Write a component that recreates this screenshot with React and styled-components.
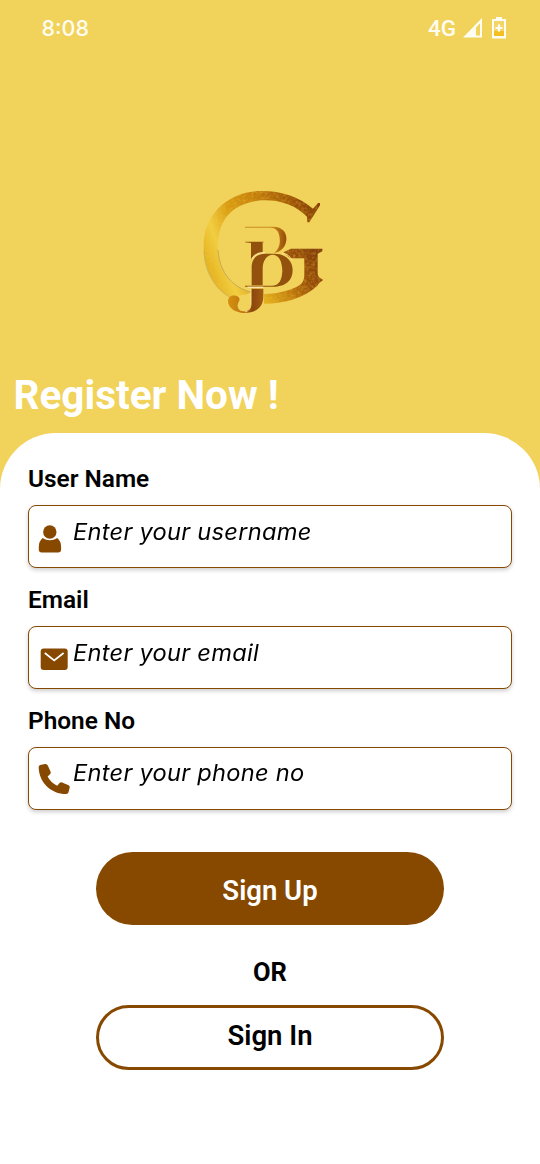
import React from "react";
import styled, { createGlobalStyle } from "styled-components";

const GlobalStyle = createGlobalStyle`
  *, *::before, *::after { box-sizing: border-box; }
  body { margin: 0; background: #f1d25b; }
`;

const Screen = styled.main`
  display: flex;
  flex-direction: column;
  width: 540px;
  height: 1164px;
  overflow: hidden;
  background: #f1d25b;
  color: #000;
  font-family: Roboto, "Liberation Sans", sans-serif;
`;

const StatusBar = styled.header`
  display: flex;
  align-items: center;
  justify-content: space-between;
  height: 56px;
  padding: 0 34px 0 41.5px;
  color: #fffdf2;
`;

const Clock = styled.span`
  font-family: Inter, sans-serif;
  font-size: 21.5px;
  font-weight: 500;
`;

const StatusIcons = styled.div`
  display: flex;
  align-items: center;
`;

const Network = styled.span`
  margin-right: 7px;
  font-size: 22.5px;
  font-weight: 500;
`;

const Brand = styled.div`
  display: flex;
  height: 269px;
  padding: 124px 0 0 190px;
`;

const Title = styled.h1`
  height: 108px;
  margin: 0;
  padding: 46px 0 0 13.5px;
  color: #fff;
  font-size: 40.5px;
  font-weight: 700;
  line-height: 48px;
  white-space: nowrap;
`;

const Card = styled.section`
  display: flex;
  flex: 1;
  flex-direction: column;
  align-items: center;
  padding: 30px 28px 0;
  border-radius: 56px 56px 0 0;
  background: #fff;
`;

const Field = styled.label`
  display: flex;
  flex-direction: column;
  width: 100%;
  height: 120.8px;
`;

const Label = styled.span`
  height: 42.4px;
  font-size: 24.4px;
  font-weight: 600;
  line-height: 32px;
`;

const InputBox = styled.span`
  display: flex;
  height: 63px;
  border: 1.5px solid #874900;
  border-radius: 8px;
  background: #fff;
  box-shadow: 0 2px 4px rgba(0, 0, 0, 0.2);
`;

const IconSlot = styled.span`
  display: flex;
  flex: none;
  width: 44px;
  padding-top: 0.5px;
`;

const Placeholder = styled.span`
  padding-top: 8.5px;
  font-family: Inter, sans-serif;
  font-size: 22.3px;
  font-style: italic;
  font-weight: 400;
  font-feature-settings: "cv11";
  letter-spacing: 0.25px;
  line-height: 34px;
  white-space: nowrap;
  transform: scaleX(1.06);
  transform-origin: left center;
`;

const Button = styled.button`
  flex: none;
  width: 348px;
  height: ${(p) => (p.$filled ? "73.5px" : "65px")};
  margin: ${(p) => (p.$filled ? "26.3px 0 0" : "0")};
  padding: ${(p) => (p.$filled ? "5px 0 0" : "0 0 4px")};
  border: ${(p) => (p.$filled ? "0" : "3px solid #874900")};
  border-radius: 37px;
  background: ${(p) => (p.$filled ? "#874900" : "#fff")};
  color: ${(p) => (p.$filled ? "#fff" : "#000")};
  font-family: inherit;
  font-size: 27.5px;
  font-weight: 600;
`;

const Divider = styled.div`
  height: 79.5px;
  padding-top: 30.5px;
  font-size: 25.5px;
  font-weight: 700;
  line-height: 32px;
`;

const Signal = () => (
  <svg width="20" height="20" viewBox="0 0 20 20">
    <path d="M0 19.5 19 0v19.5z" fill="#fffdf2" />
    <path d="M13 9.5 17 5.2v12.3h-4z" fill="#f1d25b" />
  </svg>
);

const BatteryArt = styled.svg`
  margin-left: 9px;
`;

const Battery = () => (
  <BatteryArt width="14" height="22" viewBox="0 0 14 22">
    <path d="M4 0h6v2h4v19.5H0V2h4z" fill="#fffdf2" />
    <path d="M2 4h10v11H2z" fill="#f3d56a" />
    <path d="M2 14h10v5H2z" fill="#f4bf21" />
    <path d="M7 7.5v7M3.5 11h7" stroke="#fffdf2" strokeWidth="2.2" />
  </BatteryArt>
);

const Monogram = () => (
  <svg width="150" height="145" viewBox="0 0 450 435" fill="none">
    <defs>
      <linearGradient id="ring" x1="50" y1="260" x2="390" y2="130" gradientUnits="userSpaceOnUse">
        <stop offset="0" stopColor="#e3b120" />
        <stop offset=".15" stopColor="#f1cf43" />
        <stop offset=".34" stopColor="#d99b12" />
        <stop offset=".6" stopColor="#c27d0d" />
        <stop offset=".8" stopColor="#a35b07" />
        <stop offset="1" stopColor="#874107" />
      </linearGradient>
      <linearGradient id="foot" x1="220" y1="350" x2="400" y2="230" gradientUnits="userSpaceOnUse">
        <stop offset="0" stopColor="#e2af1d" />
        <stop offset=".35" stopColor="#bf7a0e" />
        <stop offset=".62" stopColor="#98500a" />
        <stop offset="1" stopColor="#803d0b" />
      </linearGradient>
      <linearGradient id="bowl" x1="165" y1="0" x2="292" y2="0" gradientUnits="userSpaceOnUse">
        <stop offset="0" stopColor="#c79126" />
        <stop offset=".65" stopColor="#cd8a18" />
        <stop offset="1" stopColor="#914708" />
      </linearGradient>
      <linearGradient id="hook" x1="114" y1="0" x2="222" y2="0" gradientUnits="userSpaceOnUse">
        <stop offset="0" stopColor="#d4920d" />
        <stop offset=".35" stopColor="#c47b12" />
        <stop offset=".68" stopColor="#8c480c" />
        <stop offset="1" stopColor="#a45d13" />
      </linearGradient>
      <filter id="foil" x="-5%" y="-5%" width="110%" height="110%" colorInterpolationFilters="sRGB">
        <feTurbulence type="fractalNoise" baseFrequency=".12" numOctaves="2" seed="4" result="n" />
        <feColorMatrix in="n" values="0 0 0 0 .98  0 0 0 0 .78  0 0 0 0 .2  .8 0 0 0 -.32" result="g" />
        <feComposite in="g" in2="SourceGraphic" operator="in" result="grain" />
        <feMerge>
          <feMergeNode in="SourceGraphic" />
          <feMergeNode in="grain" />
        </feMerge>
      </filter>
    </defs>
    <g filter="url(#foil)">
      <path d="M390 69 384 69 369 86C325 49 270 32 213 33C112 34 41 105 41 198C41 267 73 326 119 352C137 343 158 351 184 336C126 322 86 278 84 202C82 126 121 69 213 61C270 58 318 76 351 110L352 127H358L390 76Z" fill="url(#ring)" />
      <path d="M222 342C268 341 310 330 333 312C341 305 343 296 343 279V235H301L280 217 303 206H397V214L383 221V280C384 292 391 296 398 298L397 303C389 306 386 311 382 317C342 354 286 370 222 371Z" fill="url(#foot)" />
    </g>
    <path d="M42 212C43 274 75 327 120 352" stroke="#bfa95f" strokeWidth="2" />
    <path d="M84 210C89 280 127 321 184 337" stroke="#c6aa57" strokeWidth="3" />
    <path d="M165 140H250C278 141 291 158 289 180C287 199 276 214 253 219C267 206 271 193 269 174C267 155 260 144 241 143H165Z" fill="url(#bowl)" />
    <path d="M165 185H221V187H218V218C202 220 192 227 183 239V189L165 187Z" fill="#91500b" />
    <path d="M185 316V257C187 235 201 222 224 221H251C286 221 308 241 308 271C308 301 287 318 258 320H165V317H248C268 315 276 299 277 272C276 243 267 226 250 224C229 224 219 242 218 264V316Z" fill="#92510d" />
    <path d="M185 238C194 222 207 217 225 218" stroke="#ffe39a" strokeWidth="4" />
    <path d="M276 219C292 221 301 230 307 242" stroke="#ffe39a" strokeWidth="3" />
    <path d="M183 326H220V350C220 382 197 399 163 399C133 398 114 382 114 363C115 350 125 344 139 347C150 351 151 359 145 368C139 381 146 392 158 394C174 396 183 385 183 369Z" fill="url(#hook)" />
    <path d="M173 322H220" stroke="#ffe5a7" strokeWidth="4" />
    <path d="M183 326V370C183 385 176 393 165 396" stroke="#ffdf89" strokeWidth="3" />
  </svg>
);

const UserIcon = () => (
  <svg width="44" height="60" viewBox="0 0 44 60" fill="#874900">
    <circle cx="20.8" cy="25" r="6.7" />
    <path d="M13.8 31q-4 3-4 8.9v2.7q0 3 3 3h16.3q3 0 3-3v-2.7q0-5.9-4-8.9c-4.1 2.9-10.2 2.9-14.3 0z" />
  </svg>
);

const MailIcon = () => (
  <svg width="44" height="60" viewBox="0 0 44 60">
    <rect x="11.7" y="20.5" width="27" height="21.5" rx="3" fill="#874900" />
    <path d="m15.8 25 9.4 7.5 9.4-7.5" fill="none" stroke="#fff" strokeWidth="1.7" />
  </svg>
);

const PhoneIcon = () => (
  <svg width="44" height="60" viewBox="0 0 44 60" fill="#874900">
    <path d="M11.2 17.1 16 16q2-.3 2.8 1.5l2.8 6.2q.6 1.5-.6 2.6l-2.4 2.2q3 6 9.6 9.2l2.4-2.7q1-1.2 2.5-.6l6.5 2.8q1.5.7 1.1 2.3l-1.2 4.8q-.4 1.8-2.2 1.8C21.8 46.1 9.7 34 9.7 19q0-1.5 1.5-1.9z" />
  </svg>
);

const FIELDS = [
  { label: "User Name", hint: "Enter your username", icon: <UserIcon /> },
  { label: "Email", hint: "Enter your email", icon: <MailIcon /> },
  { label: "Phone No", hint: "Enter your phone no", icon: <PhoneIcon /> },
];

export default function App() {
  return (
    <>
      <GlobalStyle />
      <Screen>
        <StatusBar>
          <Clock>8:08</Clock>
          <StatusIcons>
            <Network>4G</Network>
            <Signal />
            <Battery />
          </StatusIcons>
        </StatusBar>
        <Brand>
          <Monogram />
        </Brand>
        <Title>Register Now !</Title>
        <Card>
          {FIELDS.map((f) => (
            <Field key={f.label}>
              <Label>{f.label}</Label>
              <InputBox>
                <IconSlot>{f.icon}</IconSlot>
                <Placeholder>{f.hint}</Placeholder>
              </InputBox>
            </Field>
          ))}
          <Button $filled>Sign Up</Button>
          <Divider>OR</Divider>
          <Button>Sign In</Button>
        </Card>
      </Screen>
    </>
  );
}
